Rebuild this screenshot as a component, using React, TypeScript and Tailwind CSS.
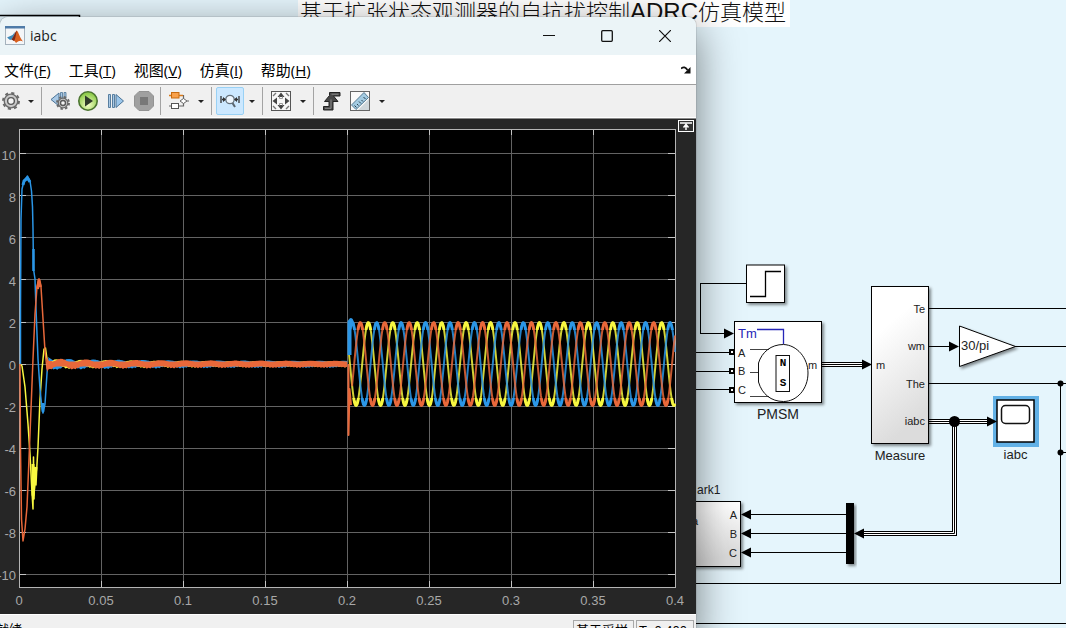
import type { ReactNode } from "react";

/**
 * Scope window floating over a Simulink-like model canvas.
 */

const MENUS = [
  { label: "文件", key: "F" },
  { label: "工具", key: "T" },
  { label: "视图", key: "V" },
  { label: "仿真", key: "I" },
  { label: "帮助", key: "H" },
];

const BLUE = "#2b96e6";
const ORANGE = "#e8683a";
const YELLOW = "#f7f740";

/* ---------- plot ---------- */

const X0 = 19;
const X1 = 675;
const Y_ZERO = 245;
const UNIT = 21;

const xTicks = [0, 0.05, 0.1, 0.15, 0.2, 0.25, 0.3, 0.35, 0.4];
const yTicks = [10, 8, 6, 4, 2, 0, -2, -4, -6, -8, -10];

const px = (t: number) => X0 + (t / 0.4) * (X1 - X0);
const py = (v: number) => Y_ZERO - v * UNIT;
const gridY = (v: number) => py(v) + (v > 2 ? -0.5 : 0.5);

function wave(peak: number, from: number) {
  const pts: string[] = [];
  for (let x = from; x <= X1; x += 0.5) {
    const v = 1.97 * Math.cos(((x - peak) / 24.45) * 2 * Math.PI);
    pts.push(`${x},${py(v).toFixed(1)}`);
  }
  return pts.join(" ");
}

// residual ripple before the load step, fading with time
function ripple(phase: number) {
  const pts: string[] = [];
  for (let x = 48; x <= 347; x += 1) {
    const amp = 0.5 + 2.2 * Math.exp(-(x - 48) / 90);
    const v = amp * Math.sin((x / 25 + phase) * 2 * Math.PI) + (x % 3 === 0 ? 0.4 : -0.2);
    pts.push(`${x},${(Y_ZERO + v).toFixed(1)}`);
  }
  return pts.join(" ");
}

const WAVES = [
  { color: YELLOW, points: wave(368.3, 349) },
  { color: BLUE, points: wave(352.2, 350) },
  { color: ORANGE, points: wave(360.3, 352) },
];

function ScopePlot() {
  return (
    <svg className="block w-full h-[495px] bg-[#262626]" viewBox="0 0 696 495" preserveAspectRatio="xMinYMin meet">
      <defs>
        <clipPath id="crests">
          <rect x="348" y="198" width="328" height="13" />
          <rect x="348" y="279" width="328" height="12" />
        </clipPath>
      </defs>
      <rect x="19" y="10" width="657" height="459" fill="#000" />
      <g stroke="#636363" strokeWidth="1" shapeRendering="crispEdges">
        {xTicks.slice(1, -1).map((t) => (
          <line key={t} x1={px(t) + 0.5} x2={px(t) + 0.5} y1="10" y2="468" />
        ))}
        {yTicks.map((v) => (
          <line key={v} x1="19" x2="675" y1={gridY(v)} y2={gridY(v)} />
        ))}
      </g>
      <g stroke="#c4c4c4" strokeWidth="1" shapeRendering="crispEdges">
        {xTicks.slice(1, -1).map((t) => (
          <path key={t} d={`M${px(t) + 0.5} 10v6M${px(t) + 0.5} 468v-6`} />
        ))}
        {yTicks.map((v) => (
          <path key={v} d={`M19 ${gridY(v)}h7M675 ${gridY(v)}h-7`} />
        ))}
      </g>
      <rect x="19.5" y="10.5" width="656" height="458" fill="none" stroke="#b4b4b4" />

      <g fill="#a8a8a8" fontSize="13" fontFamily='"Liberation Sans", Arial, sans-serif'>
        {yTicks.map((v) => (
          <text key={v} x="16" y={py(v) + 6} textAnchor="end">
            {v}
          </text>
        ))}
        {xTicks.map((t) => (
          <text key={t} x={px(t)} y="486" textAnchor="middle">
            {t}
          </text>
        ))}
      </g>

      {/* start-up transient */}
      <g fill="none" strokeWidth="1.5" strokeLinejoin="round">
        <path stroke={YELLOW} d="M20 245L22 247L25 268L28 305L30 335L31.500 365L33 390L33.500 338L34 380L35 352L36 366L37 345L38 328L40 280L42 250L44 230L45.500 229L47 240L49 247" />
        <path stroke={BLUE} d="M20.500 245L20.500 190L21 100L22 70L24 62L27.500 57L30 62L31.500 72L32.500 88L33 110L33.500 150L35 160L36 190L38 240L40 270L42 290L43 294L45 285L46.500 262L48 240" />
        <path stroke={BLUE} strokeWidth="3" d="M23 66L24 62L27.500 59L30 63" />
        <path stroke={BLUE} strokeWidth="2.5" d="M33.500 130V152M43 284V293" />
        <path stroke={ORANGE} d="M20 245L20.500 330L21.500 400L23 422L25 410L27 388L29 340L31 290L33 240L35 195L37 168L39 160L41 168L43 200L45 232L47 250L49 243" />
        <path stroke={ORANGE} strokeWidth="3" d="M37.500 170L39 161L40.500 168" />
        <path stroke={YELLOW} strokeWidth="3" d="M33 345L33 376L36 348" />
      </g>

      {/* steady state around zero */}
      <g fill="none">
        <polyline points={ripple(0)} stroke={BLUE} strokeWidth="5" />
        <polyline points={ripple(0.5)} stroke={YELLOW} strokeWidth="4" />
        <polyline points={ripple(0.32)} stroke={ORANGE} strokeWidth="5" />
        <path d="M48 245H347" stroke={ORANGE} strokeWidth="5" />
      </g>
      <path d="M47 238L49 242L52 242L50 248L47 253Z" fill={ORANGE} />
      <path d="M48 238L54 242H49Z" fill={BLUE} />

      {/* load step response */}
      <g fill="none" strokeLinejoin="round">
        {WAVES.map((w) => (
          <polyline key={w.color} points={w.points} stroke={w.color} strokeWidth="2" strokeOpacity="0.85" />
        ))}
        <g clipPath="url(#crests)">
          {WAVES.map((w) => (
            <polyline key={w.color} points={w.points} stroke={w.color} strokeWidth="3" />
          ))}
        </g>
        <path stroke={BLUE} strokeWidth="4" d="M349.500 236V203L351 201L353 206" />
        <path stroke={ORANGE} strokeWidth="2" d="M348.500 245V316L349.500 270L351 286" />
      </g>

      {/* maximize axes */}
      <rect x="678.5" y="1.500" width="15" height="11" fill="#333" stroke="#fff" />
      <path d="M680 4h12M686 11V6M683.500 8.500L686 5.500L688.500 8.500" fill="none" stroke="#fff" strokeWidth="1.500" />
    </svg>
  );
}

/* ---------- toolbar ---------- */

function ToolButton({ label, active, children }: { label: string; active?: boolean; children: ReactNode }) {
  return (
    <button
      type="button"
      aria-label={label}
      className={
        active
          ? "flex h-7 w-7 shrink-0 items-center justify-center rounded-xs border border-[#99d1f5] bg-[#cce8ff]"
          : "flex h-7 w-7 shrink-0 items-center justify-center"
      }
    >
      {children}
    </button>
  );
}

function Caret({ label }: { label: string }) {
  return (
    <button type="button" aria-label={label} className="flex h-7 w-4 shrink-0 items-center justify-center">
      <svg width="6" height="3" viewBox="0 0 6 3">
        <path d="M0 0h6L3 3z" fill="#222" />
      </svg>
    </button>
  );
}

function Separator() {
  return <div className="ml-0.5 mr-1 h-7 w-px shrink-0 bg-[#a3a3a3]" />;
}

function Gear({ cx, cy, r }: { cx: number; cy: number; r: number }) {
  const tooth = (r * Math.PI) / 8;
  return (
    <g fill="none">
      <circle cx={cx} cy={cy} r={r} stroke="#6a6a6a" strokeWidth="2" strokeDasharray={`${tooth} ${tooth}`} />
      <circle cx={cx} cy={cy} r={r - 1.2} fill="#c9c9c9" stroke="#6a6a6a" strokeWidth="1.300" />
      <circle cx={cx} cy={cy} r={r / 2.4} fill="#f4f4f4" stroke="#5a5a5a" strokeWidth="1.400" />
    </g>
  );
}

function Toolbar() {
  return (
    <div className="flex h-[34px] items-center border-b border-t border-b-white border-t-[#a0a0a0] bg-[#f0f0f0]">
      <button type="button" aria-label="配置属性" className="flex h-7 w-[23px] shrink-0 items-center">
        <svg width="20" height="20" viewBox="0 0 20 20" className="ml-px">
          <Gear cx={10} cy={10} r={8} />
        </svg>
      </button>
      <Caret label="配置选项" />
      <Separator />
      <ToolButton label="步退">
        <svg width="20" height="20" viewBox="0 0 20 20">
          <path d="M1 8.500L9 2V15Z" fill="#a9c9e6" stroke="#4b7396" />
          <path d="M10.500 1.500h2v6h-2zM14 1.500h2v6h-2z" fill="#a9c9e6" stroke="#4b7396" strokeWidth=".8" />
          <Gear cx={13} cy={12} r={6} />
        </svg>
      </ToolButton>
      <ToolButton label="运行">
        <svg width="22" height="22" viewBox="0 0 22 22">
          <defs>
            <radialGradient id="run" cx="50%" cy="70%" r="60%">
              <stop offset="0" stopColor="#f4ffc8" />
              <stop offset="1" stopColor="#90cc4c" />
            </radialGradient>
          </defs>
          <circle cx="11" cy="11" r="9.200" fill="url(#run)" stroke="#4b7430" strokeWidth="1.600" />
          <path d="M8 5.500L16 11L8 16.500Z" fill="#2f3a2a" />
        </svg>
      </ToolButton>
      <ToolButton label="步进">
        <svg width="20" height="20" viewBox="0 0 20 20">
          <path d="M2.500 3.500h2v13h-2zM6.500 3.500h2v13h-2z" fill="#a9c9e6" stroke="#4b7396" strokeWidth=".9" />
          <path d="M10 3.500L17.500 10L10 16.500Z" fill="#9cc6ea" stroke="#4b7396" />
        </svg>
      </ToolButton>
      <ToolButton label="停止">
        <svg width="20" height="20" viewBox="0 0 20 20">
          <path d="M5 .5H15L19.500 5V15L15 19.500H5L.5 15V5Z" fill="#a0a0a0" stroke="#939393" strokeLinejoin="round" />
          <rect x="6" y="6" width="8" height="8" fill="#787878" />
        </svg>
      </ToolButton>
      <Separator />
      <ToolButton label="信号查看器">
        <svg width="20" height="20" viewBox="0 0 20 20" fill="none">
          <path d="M10 4.500h4.500V8M9.500 15h5V12M0 15h2.500M18 10h2" stroke="#666" strokeWidth="1.200" />
          <path d="M0 4.500h2.500M10 4.500h4" stroke="#d87a1a" strokeWidth="1.400" />
          <rect x="2.500" y="1.500" width="7.500" height="5.500" fill="#f8a04a" stroke="#c66a10" />
          <rect x="2.500" y="12.500" width="7" height="5" fill="#fff" stroke="#555" />
          <path d="M11 10l3.500-2.500L18 10l-3.500 2.500z" fill="#fff" stroke="#666" />
        </svg>
      </ToolButton>
      <Caret label="信号选项" />
      <Separator />
      <ToolButton label="缩放" active>
        <svg width="20" height="20" viewBox="0 0 20 20" className="shrink-0" fill="none">
          <circle cx="10" cy="8.500" r="4.200" fill="#eef7ff" stroke="#66727c" strokeWidth="1.300" />
          <path d="M12.500 12L15 16" stroke="#5a6670" strokeWidth="2" />
          <path d="M1 5v7M19 5v7M2 8.500h3M18 8.500h-3" stroke="#333" strokeWidth="1.300" />
          <path d="M6 8.500L3 6v5zM14 8.500l3-2.500v5z" fill="#333" />
        </svg>
      </ToolButton>
      <Caret label="缩放选项" />
      <Separator />
      <ToolButton label="缩放至适合">
        <svg width="20" height="20" viewBox="0 0 20 20">
          <rect x=".5" y=".5" width="19" height="19" fill="#f7f7f7" stroke="#555" />
          <path d="M10 1.500L13.500 6H6.500ZM10 18.500L13.500 14H6.500ZM1.500 10L6 6.500V13.500ZM18.500 10L14 6.500V13.500Z" fill="#444" />
          <path d="M2 5L5 2M15 2L18 5M18 15L15 18M5 18L2 15" fill="none" stroke="#777" strokeWidth="1.400" />
          <path d="M8.500 5.500v2h3v-2M8.500 14.500v-2h3v2" fill="none" stroke="#999" />
        </svg>
      </ToolButton>
      <Caret label="适合选项" />
      <Separator />
      <ToolButton label="触发器">
        <svg width="20" height="20" viewBox="0 0 20 20">
          <path d="M1.500 15.500H7V10.500H2.500L7.500 4.500V1.500H18V5H11.500L16 10.500H11V19H1.500Z" fill="#484848" stroke="#222" strokeLinejoin="round" />
          <path d="M3 17.300H9V8.500M9.500 3.200H16.500" fill="none" stroke="#8a8a8a" />
        </svg>
      </ToolButton>
      <ToolButton label="游标测量">
        <svg width="20" height="20" viewBox="0 0 20 20">
          <rect x=".5" y=".5" width="19" height="19" fill="#fafafa" stroke="#666" />
          <path d="M19 8V19H8Z" fill="#cfd6da" />
          <path d="M1.500 14L14 1.500L18.500 6.500L6 18.500Z" fill="#a3cbe2" stroke="#557a92" />
          <path d="M6.500 16.500l-2-2M8.500 14.500l-1.500-1.500M11 12.500l-2-2M13 10.500l-1.500-1.500M15.500 8l-2-2" stroke="#284050" />
        </svg>
      </ToolButton>
      <Caret label="测量选项" />
    </div>
  );
}

/* ---------- scope window ---------- */

function TitleBar() {
  return (
    <header className="flex h-[38px] items-center bg-[#ebf4f7] pl-[5px] pr-0.5">
      <svg width="20" height="20" viewBox="0 0 20 20" className="shrink-0">
        <rect x=".5" y=".5" width="19" height="18" fill="#f4f6f8" stroke="#a5b2bd" />
        <rect x="0" y="0" width="20" height="2.500" fill="#4f7ba8" />
        <path d="M2 11.500L7.500 9L10 6L8.500 14L6.500 13.500L5 14Z" fill="#3d88b8" />
        <path d="M6.500 13.500C9 11 10 6 11.800 4.500C13.500 6 15 12 18 15.500C15.500 14 14 14.500 11 17C10 15 8.500 14 6.500 13.500Z" fill="#d95f1e" />
        <path d="M6.500 13.500C9 11 10 6 11.800 4.500C10.800 9 10.500 13 9 15Z" fill="#7b2a1a" />
      </svg>
      <h1 className="ml-[5px] flex-1 font-['Open_Sans',sans-serif] text-[14px] leading-5 text-[#1a1a1a]">iabc</h1>
      <button type="button" aria-label="最小化" className="flex h-full w-[58px] items-center justify-center">
        <svg width="12" height="12" viewBox="0 0 12 12"><path d="M0 5.500h12" stroke="#111" /></svg>
      </button>
      <button type="button" aria-label="最大化" className="flex h-full w-[58px] items-center justify-center">
        <svg width="12" height="12" viewBox="0 0 12 12"><rect x=".7" y=".7" width="10.600" height="10.600" rx="1" fill="none" stroke="#111" strokeWidth="1.300" /></svg>
      </button>
      <button type="button" aria-label="关闭" className="flex h-full w-[58px] items-center justify-center">
        <svg width="12" height="12" viewBox="0 0 12 12"><path d="M0 0L12 12M12 0L0 12" stroke="#111" strokeWidth="1.200" /></svg>
      </button>
    </header>
  );
}

function MenuBar() {
  return (
    <nav className="flex h-[29px] items-center gap-[18px] bg-white pl-1 pr-[5px] font-['Open_Sans','Noto_Sans_CJK_SC',sans-serif] text-[15px] leading-5 text-black">
      {MENUS.map((m) => (
        <button key={m.key} type="button" className="whitespace-nowrap">
          {m.label}(<span className="underline">{m.key}</span>)
        </button>
      ))}
      <button type="button" aria-label="停靠" className="ml-auto">
        <svg width="10" height="8" viewBox="0 0 10 8">
          <path d="M0 2.500C2.500 .5 4.500 1 6.500 4" fill="none" stroke="#111" strokeWidth="1.800" />
          <path d="M9.500 1V7.500H3Z" fill="#111" />
        </svg>
      </button>
    </nav>
  );
}

function StatusBar() {
  return (
    <footer className="flex h-7 items-start gap-0.5 border-t border-white bg-[#f0f0f0] pr-0.5 pt-[5px] font-['Liberation_Sans','Noto_Sans_CJK_SC',sans-serif] text-[13px] leading-5 text-black">
      <span className="-ml-1 flex-1">就绪</span>
      <span className="w-[61px] border border-[#a8a8a8] px-0.5">基于采样</span>
      <span className="w-[58px] border border-[#a8a8a8] px-0.5">T=0.400</span>
    </footer>
  );
}

function ScopeWindow() {
  return (
    <section className="absolute left-0 top-[17px] w-[696px] overflow-hidden rounded-t-lg shadow-[0_12px_44px_rgba(0,0,0,0.5),0_0_1px_rgba(0,0,0,0.8)]">
      <TitleBar />
      <MenuBar />
      <Toolbar />
      <div className="border-t border-[#8a8a8a]">
        <ScopePlot />
      </div>
      <StatusBar />
    </section>
  );
}

/* ---------- model canvas ---------- */

function Arrow({ x, y, left }: { x: number; y: number; left?: boolean }) {
  const d = left ? 10 : -10;
  return <path d={`M${x} ${y}l${d} -5v10z`} fill="#000" />;
}

function Bus({ d }: { d: string }) {
  return (
    <g fill="none">
      <path d={d} stroke="#000" strokeWidth="5" />
      <path d={d} stroke="#fff" strokeWidth="3" />
      <path d={d} stroke="#000" strokeWidth="1" />
    </g>
  );
}

function ModelCanvas() {
  return (
    <svg
      className="block h-full w-full"
      viewBox="0 0 1066 628"
      preserveAspectRatio="xMinYMin meet"
      fontFamily='"Liberation Sans", "Noto Sans CJK SC", sans-serif'
    >
      <defs>
        <linearGradient id="block" x1="0" y1="0" x2="0.300" y2="1">
          <stop offset="0.300" stopColor="#fff" />
          <stop offset="1" stopColor="#dcdcdc" />
        </linearGradient>
        <filter id="drop" x="-20%" y="-20%" width="150%" height="150%">
          <feDropShadow dx="2" dy="2" stdDeviation="1.500" floodOpacity="0.450" />
        </filter>
      </defs>

      {/* model title */}
      <rect x="298" y="0" width="492" height="27" fill="#fff" />
      <text x="300" y="20" fontSize="22" fill="#111" fontWeight="300">
        基于扩张状态观测器的自抗扰控制
        <tspan fontSize="24" fontWeight="400">ADRC</tspan>仿真模型
      </text>
      <path d="M0 15.500H79.500V20" fill="none" stroke="#000" strokeWidth="1.500" />

      {/* plain wires */}
      <g fill="none" stroke="#000" strokeWidth="1" shapeRendering="crispEdges">
        <path d="M746 283.500H700.500V333.500H726" />
        <path d="M690 352.500H730M690 371.500H730M690 389.500H730" />
        <path d="M928 308.500H1066M928 346.500H950M1015 346.500H1066M928 383.500H1066" />
        <path d="M1060.500 383V583.500H690M1060 452.500H1066M690 623.500H1066" />
        <path d="M749 514.500H847M749 533.500H847M749 552.500H847" />
      </g>
      <Arrow x={734} y={333.5} />
      <Arrow x={959} y={346.5} />
      <Arrow x={741} y={514.5} left />
      <Arrow x={741} y={533.5} left />
      <Arrow x={741} y={552.5} left />
      <circle cx="1060.500" cy="383.500" r="3" />
      <circle cx="1060.500" cy="452.500" r="3" />

      {/* buses */}
      <Bus d="M822 364.500H864" />
      <Bus d="M928 421.500H988" />
      <Bus d="M954.500 421.500V533.500H862" />
      <Arrow x={872} y={364.5} />
      <Arrow x={854} y={533.5} left />
      <circle cx="954.500" cy="421.500" r="5.500" />

      {/* step */}
      <rect x="746.500" y="265" width="38" height="37.500" fill="#fff" stroke="#000" filter="url(#drop)" />
      <path d="M750 296.500H765.500V271.500H781" fill="none" stroke="#000" strokeWidth="1.300" />

      {/* PMSM */}
      <rect x="734.500" y="321.500" width="87" height="81" fill="#fff" stroke="#000" filter="url(#drop)" />
      <g fill="#fff" stroke="#000" strokeWidth="2">
        <rect x="730" y="350" width="4" height="4" />
        <rect x="730" y="369" width="4" height="4" />
        <rect x="730" y="388" width="4" height="4" />
      </g>
      <path d="M750 349.500H769M750 372.500H758M750 396.500H769" stroke="#444" />
      <path d="M758.500 363C762 352 771 344.500 783.500 344.500C797 345 808 358 808 373C808 389 797 401.500 783.500 401.500C771 401.500 762 394 758.500 382Z" fill="none" stroke="#111" />
      <rect x="776" y="355.500" width="13.500" height="36" fill="#fff" stroke="#111" />
      <path d="M757 329.500H783.500V344" fill="none" stroke="#2626b8" strokeWidth="1.300" />
      <g fontSize="11" fontWeight="700" fontFamily='"Liberation Mono", monospace' textAnchor="middle">
        <text x="783" y="366">N</text>
        <text x="783" y="386">S</text>
      </g>
      <text x="738" y="338" fontSize="13" fill="#2626b8">Tm</text>
      <g fontSize="11" fill="#222">
        <text x="738" y="357">A</text>
        <text x="738" y="375">B</text>
        <text x="738" y="394">C</text>
        <text x="808" y="369">m</text>
      </g>
      <text x="778" y="419" fontSize="14" fill="#222" textAnchor="middle">PMSM</text>

      {/* Measure */}
      <rect x="871.500" y="286.500" width="57" height="157" fill="url(#block)" stroke="#000" filter="url(#drop)" />
      <g fontSize="11" fill="#222" textAnchor="end">
        <text x="925" y="313">Te</text>
        <text x="925" y="350">wm</text>
        <text x="925" y="388">The</text>
        <text x="925" y="425">iabc</text>
      </g>
      <text x="876" y="369" fontSize="11" fill="#222">m</text>
      <text x="900" y="460" fontSize="13" fill="#222" textAnchor="middle">Measure</text>

      {/* gain */}
      <path d="M959.500 326L1015.500 346.500L959.500 366.500Z" fill="#fff" stroke="#000" filter="url(#drop)" />
      <text x="961" y="350" fontSize="13" fill="#222">30/pi</text>

      {/* scope */}
      <rect x="993" y="396" width="46" height="51" fill="#62b1e6" />
      <rect x="997" y="400" width="37" height="42" fill="#fff" stroke="#000" strokeWidth="1.500" />
      <rect x="1001.500" y="405.500" width="28" height="18" rx="4" fill="none" stroke="#111" strokeWidth="1.500" />
      <path d="M997 421.500l-10 -5v10z" />
      <text x="1015.500" y="459" fontSize="13" fill="#222" textAnchor="middle">iabc</text>

      {/* Park */}
      <rect x="650.500" y="501.500" width="90" height="65" fill="url(#block)" stroke="#000" filter="url(#drop)" />
      <text x="697" y="494" fontSize="12" fill="#222">ark1</text>
      <text x="698" y="525" fontSize="11" fill="#222" textAnchor="end">a</text>
      <g fontSize="11" fill="#222" textAnchor="end">
        <text x="737" y="519">A</text>
        <text x="737" y="538">B</text>
        <text x="737" y="557">C</text>
      </g>

      {/* demux */}
      <rect x="846" y="503" width="8" height="61" fill="#000" filter="url(#drop)" />
    </svg>
  );
}

export default function App() {
  return (
    <main className="relative h-screen w-full overflow-hidden bg-[#e5f5fc]">
      <ModelCanvas />
      <ScopeWindow />
    </main>
  );
}
